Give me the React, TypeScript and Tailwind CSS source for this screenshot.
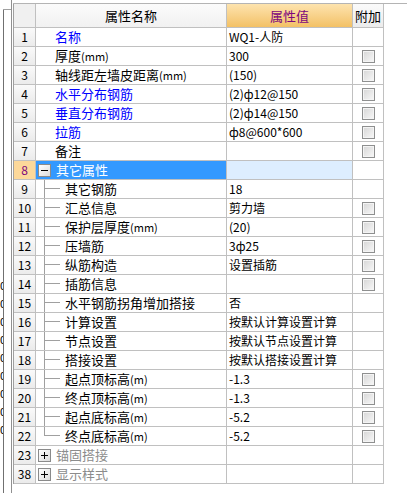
import React from "react";

type Row = {
  n: number;
  name: string;
  value?: string;
  blue?: boolean;
  cb?: boolean;
  kind?: "plain" | "child" | "group";
  open?: boolean;
  last?: boolean;
};

const ROWS: Row[] = [
  { n: 1, name: "名称", blue: true, value: "WQ1-人防" },
  { n: 2, name: "厚度(mm)", value: "300", cb: true },
  { n: 3, name: "轴线距左墙皮距离(mm)", value: "(150)", cb: true },
  { n: 4, name: "水平分布钢筋", blue: true, value: "(2)ф12@150", cb: true },
  { n: 5, name: "垂直分布钢筋", blue: true, value: "(2)ф14@150", cb: true },
  { n: 6, name: "拉筋", blue: true, value: "ф8@600*600", cb: true },
  { n: 7, name: "备注", value: "", cb: true },
  { n: 8, name: "其它属性", kind: "group", open: true },
  { n: 9, name: "其它钢筋", kind: "child", value: "18" },
  { n: 10, name: "汇总信息", kind: "child", value: "剪力墙", cb: true },
  { n: 11, name: "保护层厚度(mm)", kind: "child", value: "(20)", cb: true },
  { n: 12, name: "压墙筋", kind: "child", value: "3ф25", cb: true },
  { n: 13, name: "纵筋构造", kind: "child", value: "设置插筋", cb: true },
  { n: 14, name: "插筋信息", kind: "child", value: "", cb: true },
  { n: 15, name: "水平钢筋拐角增加搭接", kind: "child", value: "否" },
  { n: 16, name: "计算设置", kind: "child", value: "按默认计算设置计算" },
  { n: 17, name: "节点设置", kind: "child", value: "按默认节点设置计算" },
  { n: 18, name: "搭接设置", kind: "child", value: "按默认搭接设置计算" },
  { n: 19, name: "起点顶标高(m)", kind: "child", value: "-1.3", cb: true },
  { n: 20, name: "终点顶标高(m)", kind: "child", value: "-1.3", cb: true },
  { n: 21, name: "起点底标高(m)", kind: "child", value: "-5.2", cb: true },
  { n: 22, name: "终点底标高(m)", kind: "child", value: "-5.2", cb: true, last: true },
  { n: 23, name: "锚固搭接", kind: "group" },
  { n: 38, name: "显示样式", kind: "group" },
];

const ZEROS = Array.from({ length: 9 });

function Checkbox() {
  return (
    <div className="w-[13px] h-[13px] border border-[#8e8f8f] bg-gradient-to-br from-[#d6d6d6] to-[#f8f8f8] shadow-[inset_0_0_0_1px_#f4f4f4]" />
  );
}

function ToggleBox({ open }: { open?: boolean }) {
  return (
    <div className="w-[13px] h-[13px] border border-[#8a8a8a] bg-gradient-to-br from-[#ffffff] to-[#dcdcdc] flex items-center justify-center">
      {open ? (
        <div className="w-[7px] h-[1px] bg-black" />
      ) : (
        <div className="relative w-[7px] h-[7px] flex items-center justify-center">
          <div className="w-[7px] h-[1px] bg-black" />
          <div className="absolute w-[1px] h-[7px] bg-black" />
        </div>
      )}
    </div>
  );
}

function TreeLine({ last }: { last?: boolean }) {
  return (
    <div className="ml-[8px] w-[16px] h-full flex flex-col">
      <div className="h-[9px] border-l border-b border-[#a0a0a0]" />
      {!last && <div className="flex-1 border-l border-[#a0a0a0]" />}
    </div>
  );
}

// "(mm)" / "(m)" units are drawn a touch smaller than the label
function Label({ text }: { text: string }) {
  const m = text.match(/^(.*?)(\(m+\))$/);
  if (!m) return <>{text}</>;
  return (
    <>
      {m[1]}
      <span className="text-[11px]">{m[2]}</span>
    </>
  );
}

export default function App() {
  return (
    <div className="flex w-[407px] h-[493px] bg-white overflow-hidden font-['Noto_Sans_CJK_SC','Liberation_Sans',sans-serif] text-[12px] text-black">
      {/* clipped neighbour panel */}
      <div className="w-[11px] flex shrink-0">
        <div className="w-[3px] flex flex-col pt-[276px] overflow-hidden">
          {ZEROS.map((_, i) => (
            <div key={i} className="h-[18px] leading-[18px] text-[11px]">0</div>
          ))}
        </div>
        <div className="flex-1 flex flex-col">
          <div className="h-[10px] border-b border-[#a0a0a0]" />
          <div className="flex-1 border-l border-[#707070]" />
        </div>
      </div>
      <div className="w-[2px] border-l border-[#909090] shrink-0" />

      <div className="flex-1 pt-[3px]">
        <div className="border-t border-[#b4b4b4]">
          <div className="w-[371px] border-l border-[#a0a0a0]">
            {/* header */}
            <div className="flex h-[24px] border-b border-[#c0c0c0]">
              <div className="w-[22px] border-r border-[#c0c0c0] bg-[#f0f0f0]" />
              <div className="w-[191px] border-r border-[#c0c0c0] bg-gradient-to-b from-[#fbfbfb] to-[#f1f1f1] flex items-center justify-center text-[13px]">
                属性名称
              </div>
              <div className="w-[126px] border-r border-[#c0c0c0] bg-gradient-to-b from-[#fde3ae] to-[#f3c164] flex items-center justify-center text-[13px] text-[#7d077d]">
                属性值
              </div>
              <div className="w-[31px] border-r border-[#c0c0c0] bg-gradient-to-b from-[#fafafa] to-[#ececec] flex items-center justify-center text-[13px]">
                附加
              </div>
            </div>

            {ROWS.map((r) => {
              const sel = r.n === 8;
              const group = r.kind === "group";
              return (
                <div key={r.n} className="flex h-[19px] border-b border-[#c0c0c0]">
                  <div
                    className={`w-[22px] border-r border-[#c0c0c0] flex items-center justify-center ${
                      sel
                        ? "bg-[#fcd89a] text-[#7d077d]"
                        : "bg-gradient-to-b from-[#fafafa] to-[#ebebeb]"
                    }`}
                  >
                    {r.n}
                  </div>
                  <div
                    className={`w-[191px] border-r border-[#c0c0c0] flex items-center whitespace-nowrap overflow-hidden ${
                      sel ? "bg-[#3399ff] text-white" : ""
                    }`}
                  >
                    {group ? (
                      <>
                        <div className="ml-[2px]">
                          <ToggleBox open={r.open} />
                        </div>
                        <span className={`ml-[5px] text-[13px] ${sel ? "text-white" : "text-[#8c8c8c]"}`}>
                          {r.name}
                        </span>
                      </>
                    ) : r.kind === "child" ? (
                      <>
                        <TreeLine last={r.last} />
                        <span className="ml-[5px] text-[13px]">
                          <Label text={r.name} />
                        </span>
                      </>
                    ) : (
                      <span className={`ml-[19px] text-[13px] ${r.blue ? "text-[#0000ff]" : ""}`}>
                        <Label text={r.name} />
                      </span>
                    )}
                  </div>
                  <div
                    className={`w-[126px] border-r border-[#c0c0c0] flex items-center pl-[2px] whitespace-nowrap overflow-hidden ${
                      sel ? "bg-[#ddeeff]" : ""
                    }`}
                  >
                    {r.value}
                  </div>
                  <div className="w-[31px] border-r border-[#c0c0c0] flex items-center justify-center">
                    {r.cb && <Checkbox />}
                  </div>
                </div>
              );
            })}
          </div>
        </div>
      </div>
    </div>
  );
}
